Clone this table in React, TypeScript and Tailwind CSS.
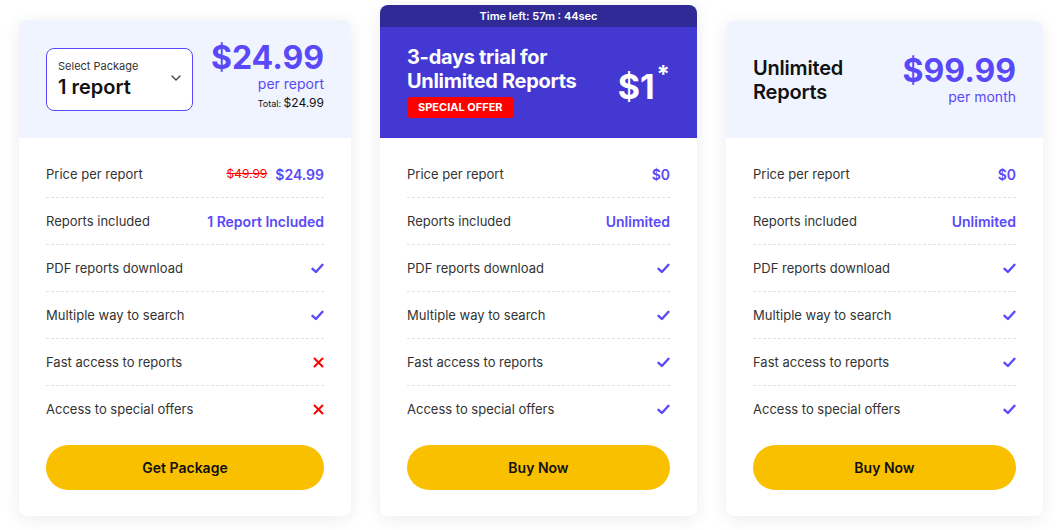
import React from 'react';

const FONT = { fontFamily: 'Inter, "Noto Sans", sans-serif' };

type Row = { label: string; value: React.ReactNode };

const Check = () => (
  <svg width="13" height="11" viewBox="0 0 13 11" fill="none">
    <path d="M1.5 5.8l3.4 3.2L11.5 1.8" stroke="#5a49f8" strokeWidth="2.4" strokeLinecap="round" strokeLinejoin="round" />
  </svg>
);

const Cross = () => (
  <svg width="11" height="11" viewBox="0 0 11 11" fill="none">
    <path d="M1.5 1.5l8 8M9.5 1.5l-8 8" stroke="#ff0000" strokeWidth="2" strokeLinecap="round" />
  </svg>
);

const Value = ({ children }: { children: React.ReactNode }) => (
  <span className="text-[14px] font-semibold text-[#5a49f8]">{children}</span>
);

const Features = ({ rows, button }: { rows: Row[]; button: string }) => (
  <div className="px-[27px] pt-[13px] pb-[26px]">
    {rows.map((row, i) => (
      <div
        key={row.label}
        className={`flex h-[47px] items-center justify-between ${i < rows.length - 1 ? 'border-b border-dashed border-[#e2e2e2]' : ''}`}
      >
        <span className="pt-[1px] text-[13px] text-[#333]">{row.label}</span>
        {row.value}
      </div>
    ))}
    <button className="mt-[12px] flex h-[45px] w-full items-center justify-center rounded-full bg-[#f9c000] text-[14px] font-semibold text-[#111]">
      {button}
    </button>
  </div>
);

const commonRows = (fast: boolean, special: boolean): Row[] => [
  { label: 'PDF reports download', value: <Check /> },
  { label: 'Multiple way to search', value: <Check /> },
  { label: 'Fast access to reports', value: fast ? <Check /> : <Cross /> },
  { label: 'Access to special offers', value: special ? <Check /> : <Cross /> },
];

export default function App() {
  return (
    <div style={FONT} className="flex h-[530px] w-[1060px] items-end gap-[29px] bg-white pl-[19px] pb-[14px]">
      {/* package card */}
      <div className="w-[332px] overflow-hidden rounded-lg bg-white shadow-[0_3px_18px_rgba(0,0,0,0.08)]">
        <div className="flex h-[118px] justify-between bg-[#f0f4fe] px-[27px] pt-[21px]">
          <div className="relative mt-[7px] h-[63px] w-[147px] rounded-lg border border-[#5a49f8] bg-white px-[11px] pt-[9px]">
            <div className="text-[11px] leading-[16px] text-[#333]">Select Package</div>
            <div className="mt-[1px] text-[20px] font-semibold leading-[24px] text-[#111]">1 report</div>
            <svg className="absolute right-[11px] top-[26px]" width="10" height="6" viewBox="0 0 10 6" fill="none">
              <path d="M1 1l4 4 4-4" stroke="#444" strokeWidth="1.4" strokeLinecap="round" strokeLinejoin="round" />
            </svg>
          </div>
          <div className="flex flex-col items-end">
            <div className="text-[32px] font-bold leading-[33px] text-[#5a49f8]">$24.99</div>
            <div className="mt-[1px] text-[14px] leading-[18px] text-[#5a49f8]">per report</div>
            <div className="mt-[2px] text-[12px] leading-[16px] text-[#111]">
              <span className="text-[9px]">Total: </span>$24.99
            </div>
          </div>
        </div>
        <Features
          button="Get Package"
          rows={[
            {
              label: 'Price per report',
              value: (
                <span className="flex items-center gap-[8px]">
                  <span className="text-[12px] text-[#ff0000] line-through">$49.99</span>
                  <Value>$24.99</Value>
                </span>
              ),
            },
            { label: 'Reports included', value: <Value>1 Report Included</Value> },
            ...commonRows(false, false),
          ]}
        />
      </div>

      {/* trial card */}
      <div className="w-[317px] overflow-hidden rounded-lg bg-white shadow-[0_3px_18px_rgba(0,0,0,0.08)]">
        <div className="flex h-[22px] items-center justify-center bg-[#2f2a96] pt-[1px] text-[11px] font-semibold text-white">
          Time left: 57m : 44sec
        </div>
        <div className="flex h-[111px] justify-between bg-[#4338d2] px-[27px] pt-[18px]">
          <div>
            <div className="text-[20px] font-bold leading-[24px] tracking-[-0.3px] text-white">
              3-days trial for
              <br />
              Unlimited Reports
            </div>
            <div className="mt-[4px] inline-flex h-[21px] items-center rounded-[4px] bg-[#ff0000] px-[11px] text-[11px] font-bold text-white">
              SPECIAL OFFER
            </div>
          </div>
          <div className="flex items-start pt-[22px] text-white">
            <span className="text-[34px] font-bold leading-[40px]">$1</span>
            <span className="-mt-[4px] ml-[2px] text-[24px] font-bold leading-[24px]">*</span>
          </div>
        </div>
        <Features
          button="Buy Now"
          rows={[
            { label: 'Price per report', value: <Value>$0</Value> },
            { label: 'Reports included', value: <Value>Unlimited</Value> },
            ...commonRows(true, true),
          ]}
        />
      </div>

      {/* unlimited card */}
      <div className="w-[317px] overflow-hidden rounded-lg bg-white shadow-[0_3px_18px_rgba(0,0,0,0.08)]">
        <div className="flex h-[117px] items-center justify-between bg-[#f0f4fe] px-[27px]">
          <div className="text-[20px] font-semibold leading-[24px] tracking-[-0.2px] text-[#111]">
            Unlimited
            <br />
            Reports
          </div>
          <div className="flex flex-col items-end">
            <div className="text-[32px] font-bold leading-[34px] text-[#5a49f8]">$99.99</div>
            <div className="text-[14px] leading-[18px] text-[#5a49f8]">per month</div>
          </div>
        </div>
        <Features
          button="Buy Now"
          rows={[
            { label: 'Price per report', value: <Value>$0</Value> },
            { label: 'Reports included', value: <Value>Unlimited</Value> },
            ...commonRows(true, true),
          ]}
        />
      </div>
    </div>
  );
}
